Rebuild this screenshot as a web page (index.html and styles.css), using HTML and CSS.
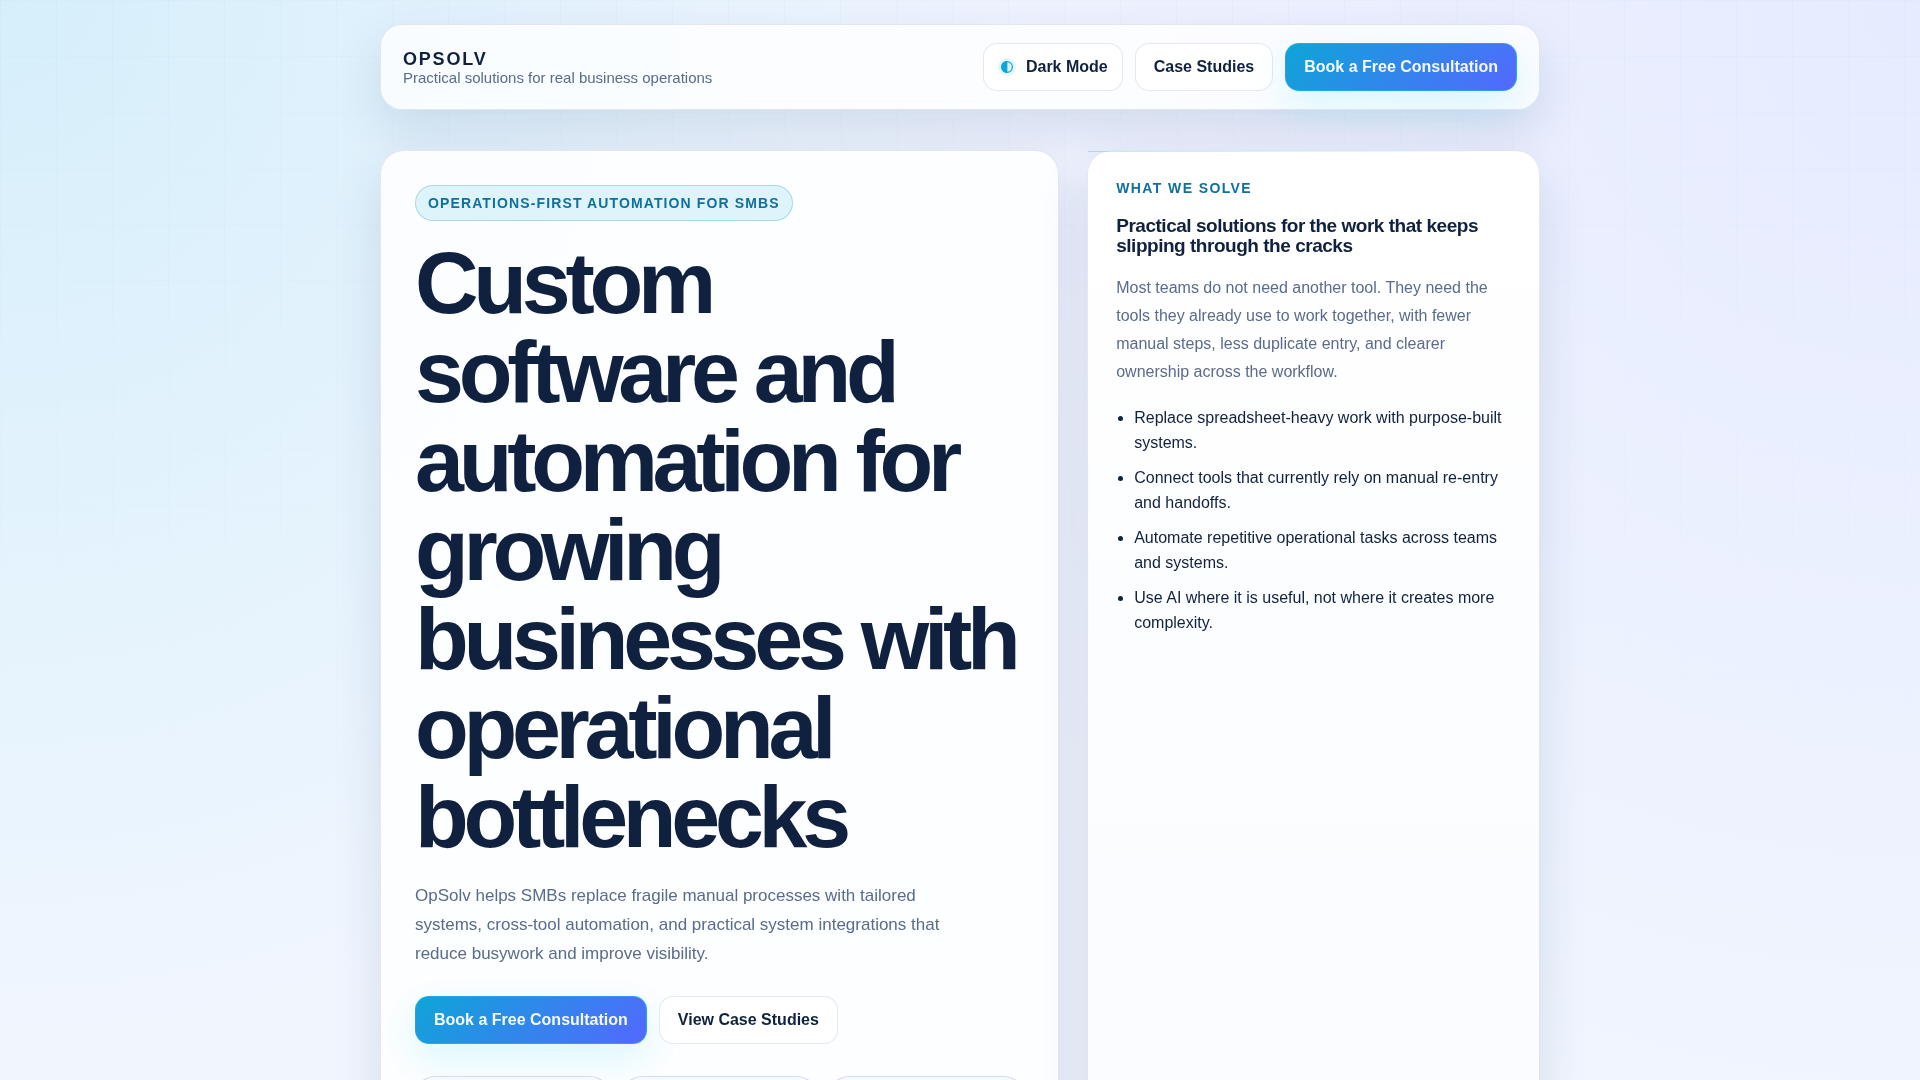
FILE: index.html
```html
<!DOCTYPE html>
<html lang="en">
<head>
    <meta charset="UTF-8">
    <meta name="viewport" content="width=device-width, initial-scale=1.0">
    <title>OpSolv</title>
    <link rel="stylesheet" href="styles.css">
</head>
<body>
    <div class="shell">
        <header class="topbar">
            <div class="brand">
                <span class="brand-name">OPSOLV</span>
                <span class="brand-tag">Practical solutions for real business operations</span>
            </div>
            <nav class="topbar-actions">
                <button class="btn theme-toggle" type="button">
                    <span class="theme-icon" aria-hidden="true">
                        <svg viewBox="0 0 12 12" width="12" height="12">
                            <circle cx="6" cy="6" r="5.4" fill="none" stroke="currentColor" stroke-width="1.2"/>
                            <path d="M6.4 0a6 6 0 0 0 0 12z" fill="currentColor"/>
                        </svg>
                    </span>
                    Dark Mode
                </button>
                <a class="btn" href="#case-studies">Case Studies</a>
                <a class="btn btn-primary" href="#book">Book a Free Consultation</a>
            </nav>
        </header>

        <main class="hero">
            <section class="card hero-card">
                <span class="pill">OPERATIONS-FIRST AUTOMATION FOR SMBS</span>
                <h1>Custom software and automation for growing businesses with operational bottlenecks</h1>
                <p class="lead">OpSolv helps SMBs replace fragile manual processes with tailored systems, cross-tool automation, and practical system integrations that reduce busywork and improve visibility.</p>
                <div class="hero-actions">
                    <a class="btn btn-primary" href="#book">Book a Free Consultation</a>
                    <a class="btn" href="#case-studies">View Case Studies</a>
                </div>
                <div class="metrics">
                    <div class="metric"></div>
                    <div class="metric"></div>
                    <div class="metric"></div>
                </div>
            </section>

            <aside class="card side-card">
                <p class="eyebrow">WHAT WE SOLVE</p>
                <h2>Practical solutions for the work that keeps slipping through the cracks</h2>
                <p class="side-text">Most teams do not need another tool. They need the tools they already use to work together, with fewer manual steps, less duplicate entry, and clearer ownership across the workflow.</p>
                <ul class="side-list">
                    <li>Replace spreadsheet-heavy work with purpose-built systems.</li>
                    <li>Connect tools that currently rely on manual re-entry and handoffs.</li>
                    <li>Automate repetitive operational tasks across teams and systems.</li>
                    <li>Use AI where it is useful, not where it creates more complexity.</li>
                </ul>
            </aside>
        </main>
    </div>
</body>
</html>
```

FILE: styles.css
```css
:root {
    --text: #10213f;
    --muted: #5a6b8c;
    --line: rgba(15, 50, 110, 0.11);
    --accent: #0ea5d7;
    --accent-2: #5468ff;
    --accent-text: #0f709e;
}

* {
    box-sizing: border-box;
}

body {
    margin: 0;
    min-height: 100vh;
    font-family: "Liberation Sans", Arial, sans-serif;
    font-size: 16px;
    color: var(--text);
    background:
        radial-gradient(circle at top left, rgba(14, 195, 220, 0.12), transparent 45%),
        radial-gradient(circle at top right, rgba(84, 104, 255, 0.07), transparent 50%),
        linear-gradient(180deg, #f1f5ff 0%, #f0f6fe 100%);
}

/* faint grid over the page background */
body::before {
    content: "";
    position: fixed;
    inset: 0;
    z-index: -1;
    background-image:
        linear-gradient(rgba(15, 80, 160, 0.015) 1px, transparent 1px),
        linear-gradient(90deg, rgba(15, 80, 160, 0.015) 1px, transparent 1px);
    background-size: 56px 56px;
    -webkit-mask-image: linear-gradient(180deg, #000, transparent 80%);
    mask-image: linear-gradient(180deg, #000, transparent 80%);
}

.shell {
    width: min(1160px, calc(100% - 32px));
    margin: 0 auto;
    padding: 24px 0 72px;
}

.topbar {
    display: flex;
    align-items: center;
    justify-content: space-between;
    gap: 20px;
    margin-bottom: 40px;
    padding: 18px 22px;
    border: 1px solid var(--line);
    border-radius: 22px;
    background: rgba(255, 255, 255, 0.8);
    box-shadow: 0 20px 50px rgba(20, 50, 100, 0.12);
}

.brand {
    display: flex;
    flex-direction: column;
    padding-top: 2px;
}

.brand-name {
    font-size: 18px;
    line-height: 20px;
    font-weight: 700;
    letter-spacing: 0.1em;
}

.brand-tag {
    font-size: 15px;
    line-height: 18px;
    color: var(--muted);
}

.topbar-actions,
.hero-actions {
    display: flex;
    flex-wrap: wrap;
    gap: 12px;
}

.btn {
    display: inline-flex;
    align-items: center;
    justify-content: center;
    min-height: 48px;
    padding: 0 18px;
    border: 1px solid var(--line);
    border-radius: 14px;
    background: #fff;
    color: var(--text);
    font: inherit;
    font-weight: 700;
    text-decoration: none;
    cursor: pointer;
}

.btn-primary {
    border-color: rgba(34, 200, 240, 0.4);
    background: linear-gradient(135deg, var(--accent), var(--accent-2));
    color: #f4f9ff;
    box-shadow: 0 14px 40px rgba(20, 210, 250, 0.16);
}

.theme-toggle {
    gap: 10px;
    padding: 0 14px;
}

.theme-icon {
    display: grid;
    place-items: center;
    width: 18px;
    height: 18px;
    border-radius: 50%;
    background: rgba(14, 175, 215, 0.12);
    color: var(--accent);
}

.hero {
    display: grid;
    grid-template-columns: 3fr 2fr;
    gap: 28px;
}

.card {
    position: relative;
    border: 1px solid var(--line);
    border-radius: 24px;
    background: rgba(255, 255, 255, 0.86);
    box-shadow: 0 20px 50px rgba(20, 50, 100, 0.12);
}

.hero-card {
    padding: 34px;
}

.pill {
    display: inline-flex;
    padding: 8px 12px;
    border: 1px solid rgba(15, 130, 180, 0.25);
    border-radius: 999px;
    background: rgba(14, 175, 215, 0.13);
    color: var(--accent-text);
    font-size: 14px;
    line-height: 18px;
    font-weight: 700;
    letter-spacing: 0.08em;
}

h1 {
    margin: 17px 0 20px;
    font-size: 88px;
    line-height: 89px;
    letter-spacing: -0.06em;
}

.lead {
    max-width: 560px;
    margin: 0 0 28px;
    color: var(--muted);
    font-size: 17px;
    line-height: 29px;
}

.metrics {
    display: grid;
    grid-template-columns: repeat(3, 1fr);
    gap: 12px;
    margin-top: 32px;
}

.metric {
    min-height: 110px;
    border: 1px solid rgba(40, 90, 180, 0.18);
    border-radius: 20px;
    background: #f6f9ff;
}

.side-card {
    padding: 28px;
    background: linear-gradient(180deg, #fff, #f9fbff);
}

/* hairline highlight along the top edge */
.side-card::before {
    content: "";
    position: absolute;
    inset: 0 0 auto;
    height: 1px;
    background: linear-gradient(90deg, rgba(14, 190, 240, 0.3), transparent);
}

.eyebrow {
    margin: 0 0 19px;
    color: var(--accent-text);
    font-size: 14px;
    line-height: 18px;
    font-weight: 700;
    letter-spacing: 0.1em;
}

h2 {
    margin: 0 0 18px;
    font-size: 19px;
    line-height: 20px;
    letter-spacing: -0.025em;
}

.side-text {
    margin: 0 0 19px;
    color: var(--muted);
    line-height: 28px;
}

.side-list {
    display: grid;
    gap: 10px;
    margin: 0;
    padding-left: 18px;
    line-height: 25px;
}
```
